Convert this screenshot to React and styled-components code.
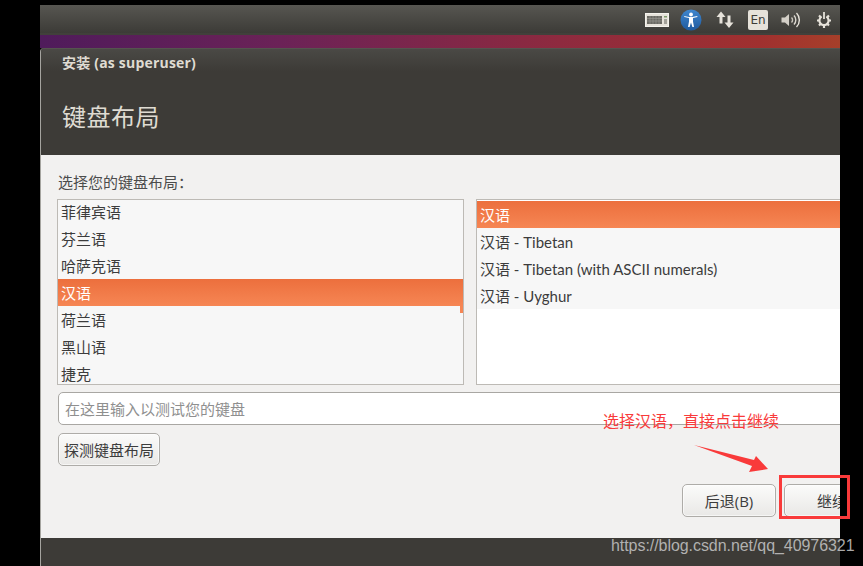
import React from "react";
import styled, { createGlobalStyle } from "styled-components";

const GlobalStyle = createGlobalStyle`
  html, body {
    margin: 0;
    padding: 0;
    background: #000;
  }
  body {
    font-family: "Open Sans", "Noto Sans CJK SC", sans-serif;
  }
`;

const Stage = styled.div`
  position: relative;
  width: 863px;
  height: 566px;
  padding-top: 5px;
  box-sizing: border-box;
  background: #000;
  overflow: hidden;
`;

const Screen = styled.div`
  width: 800px;
  height: 561px;
  margin-left: 40px;
  display: flex;
  flex-direction: column;
  overflow: hidden;
`;

const TopPanel = styled.div`
  height: 28px;
  flex: none;
  display: flex;
  align-items: center;
  justify-content: flex-end;
  padding: 2px 7px 0 0;
  box-sizing: border-box;
  background: linear-gradient(#575651, #3c3b37);
`;

const Wallpaper = styled.div`
  height: 15px;
  flex: none;
  box-sizing: border-box;
  border-top: 2px solid #41403b;
  background: linear-gradient(90deg, #4f1b5b 0%, #6b2257 30%, #8e2a3f 65%, #a0302f 90%, #a63f2a 100%);
`;

const Window = styled.div`
  flex: 1;
  min-height: 0;
  display: flex;
  flex-direction: column;
  overflow: hidden;
  border-left: 1px solid #a5a49f;
  border-top-left-radius: 4px;
  background: #3d3b37;
`;

const WindowHeader = styled.div`
  height: 107px;
  flex: none;
  padding-left: 21px;
  box-sizing: border-box;
  border-top: 1px solid #55544f;
  background: linear-gradient(#4a4945 0, #3d3b37 22px);
  color: #dfdbd2;
`;

const WindowTitle = styled.div`
  height: 28px;
  line-height: 28px;
  font-size: 14px;
  font-weight: 700;
  letter-spacing: 0.2px;
`;

const Heading = styled.h1`
  margin: 25px 0 0;
  height: 30px;
  line-height: 30px;
  font-size: 24px;
  letter-spacing: 0.5px;
  font-weight: 400;
`;

const Body = styled.div`
  width: 844px;
  height: 383px;
  flex: none;
  padding: 19px 5px 0 16px;
  box-sizing: border-box;
  background: #f2f1f0;
  color: #3c3c3c;
`;

const Prompt = styled.div`
  height: 18px;
  line-height: 16px;
  margin-bottom: 7px;
  padding-left: 1px;
  font-size: 15px;
  color: #4c4c4c;
`;

const ListRow = styled.div`
  display: flex;
  gap: 12px;
`;

const List = styled.div`
  position: relative;
  height: 186px;
  box-sizing: border-box;
  border: 1px solid #bdbab5;
  background: ${(p) => (p.$fill ? "#fff" : "#f7f7f7")};
  overflow: hidden;
  flex: ${(p) => (p.$grow ? "1" : "none")};
  width: ${(p) => (p.$grow ? "auto" : "407px")};
`;

const Rows = styled.div`
  margin-top: ${(p) => p.$offset}px;
  background: #f7f7f7;
`;

const Row = styled.div`
  height: 27px;
  line-height: 29px;
  padding-left: 3px;
  font-family: Lato, "Noto Sans CJK SC", sans-serif;
  font-size: 15px;
  white-space: nowrap;
  color: ${(p) => (p.$active ? "#fff" : "#3c3c3c")};
  background: ${(p) => (p.$active ? "linear-gradient(#ec6f3d, #f68654)" : "transparent")};
`;

const ScrollThumb = styled.div`
  position: absolute;
  right: 0;
  top: 106px;
  width: 3px;
  height: 7px;
  background: #f68654;
`;

const TestInput = styled.input`
  display: block;
  width: calc(100% - 1px);
  height: 33px;
  margin: 7px 0 0 1px;
  padding: 0 6px;
  box-sizing: border-box;
  border: 1px solid #a9a7a3;
  border-radius: 5px;
  background: #fff;
  font: 15px "Open Sans", "Noto Sans CJK SC", sans-serif;

  &::placeholder {
    color: #8f8f8f;
    opacity: 1;
  }
`;

const Button = styled.button`
  width: ${(p) => p.$width}px;
  height: 33px;
  padding: 0;
  flex: none;
  box-sizing: border-box;
  border: 1px solid #aeaca8;
  border-radius: 5px;
  background: linear-gradient(#fbfbfa, #e9e8e6);
  box-shadow: inset 0 0 0 1px rgba(255, 255, 255, 0.6);
  font: 15px "Open Sans", "Noto Sans CJK SC", sans-serif;
  color: #3c3c3c;
`;

const DetectRow = styled.div`
  margin-top: 8px;
  margin-left: 1px;
`;

const Actions = styled.div`
  display: flex;
  justify-content: flex-end;
  gap: 8px;
  margin-top: 18px;
`;

const BottomBar = styled.div`
  flex: 1;
  background: #3d3b37;
`;

const TrayIcon = styled.svg`
  display: block;
  flex: none;
  margin-left: ${(p) => p.$gap}px;
`;

const LangBadge = styled.div`
  width: 20px;
  height: 20px;
  margin-left: 14px;
  flex: none;
  border-radius: 2px;
  background: #e6e2da;
  color: #3c3b37;
  font: 12px/20px "DejaVu Sans", sans-serif;
  text-align: center;
`;

const Note = styled.div`
  position: absolute;
  left: 603px;
  top: 410px;
  font-size: 16px;
  line-height: 22px;
  color: #f93a3a;
  white-space: nowrap;
`;

const Overlay = styled.svg`
  position: absolute;
  left: 0;
  top: 0;
  pointer-events: none;
`;

const Watermark = styled.div`
  position: absolute;
  left: 611px;
  top: 537px;
  font: 16px/18px "Liberation Sans", sans-serif;
  letter-spacing: -0.06px;
  color: rgba(200, 200, 200, 0.85);
  white-space: nowrap;
`;

const leftRows = ["菲律宾语", "芬兰语", "哈萨克语", "汉语", "荷兰语", "黑山语", "捷克"];
const rightRows = ["汉语", "汉语 - Tibetan", "汉语 - Tibetan (with ASCII numerals)", "汉语 - Uyghur"];

function KeyboardIcon() {
  return (
    <TrayIcon width="24" height="14" viewBox="0 0 24 14">
      <rect x="0.5" y="0.5" width="23" height="13" fill="#e6e2da" stroke="#f4f2ec" />
      <rect x="2" y="3" width="15" height="8" fill="#6a6963" />
      <path d="M2 5.5h15M2 8h15M5 3v8M8 3v8M11 3v8M14 3v8" stroke="#9c9a93" strokeWidth="0.6" />
      <rect x="19" y="3" width="3" height="1.5" fill="#7d9a6a" />
      <rect x="19" y="6" width="3" height="5" fill="#a3a199" />
    </TrayIcon>
  );
}

function AccessIcon() {
  return (
    <TrayIcon width="22" height="22" viewBox="0 0 22 22" $gap={11}>
      <defs>
        <linearGradient id="accessBlue" x1="0" y1="0" x2="0" y2="1">
          <stop offset="0" stopColor="#3f87cf" />
          <stop offset="1" stopColor="#1f5a9e" />
        </linearGradient>
      </defs>
      <circle cx="11" cy="11" r="10.5" fill="url(#accessBlue)" />
      <circle cx="11" cy="5.5" r="1.9" fill="#fff" />
      <path d="M4.5 8l4.5 1v3.5L8 18h1.6l1.4-4.5 1.4 4.5H14l-1-5.5V9l4.5-1-.3-1-5 1h-3.2l-5-1z" fill="#fff" />
    </TrayIcon>
  );
}

function NetworkIcon() {
  return (
    <TrayIcon width="18" height="18" viewBox="0 0 18 18" $gap={14}>
      <path d="M5 0.5L0.5 6H3.5V12.5H6.5V6H9.5z" fill="#e6e2da" />
      <path d="M13 17L8.5 11.5H11.5V4.5H14.5V11.5H17.5z" fill="#e6e2da" />
    </TrayIcon>
  );
}

function VolumeIcon() {
  return (
    <TrayIcon width="20" height="18" viewBox="0 0 20 18" $gap={13}>
      <path d="M0.5 6.5H4L8 3V15L4 11.5H0.5z" fill="#d3cfc7" />
      <path d="M10.5 6.5a3.5 3.5 0 0 1 0 5" fill="none" stroke="#c9c5bc" strokeWidth="1.4" />
      <path d="M13 4.5a6.5 6.5 0 0 1 0 9" fill="none" stroke="#dcd8d0" strokeWidth="1.4" />
      <path d="M15.5 2a10 10 0 0 1 0 14" fill="none" stroke="#e6e2da" strokeWidth="1.4" />
    </TrayIcon>
  );
}

function GearIcon() {
  return (
    <TrayIcon width="18" height="18" viewBox="0 0 18 18" $gap={14}>
      <path
        d="M6.6 5.6a4.6 4.6 0 1 0 4.8 0"
        fill="none"
        stroke="#e6e2da"
        strokeWidth="2.2"
      />
      <path
        d="M2 9.5h2.5M13.5 9.5H16M4 4.5l1.8 1.8M12.2 12.7l1.8 1.8M14 4.5l-1.8 1.8M5.8 12.7L4 14.5M9 14.5V17"
        stroke="#e6e2da"
        strokeWidth="2.2"
      />
      <path d="M9 1v7" stroke="#e6e2da" strokeWidth="1.8" />
    </TrayIcon>
  );
}

export default function App() {
  return (
    <Stage>
      <GlobalStyle />
      <Screen>
        <TopPanel>
          <KeyboardIcon />
          <AccessIcon />
          <NetworkIcon />
          <LangBadge>En</LangBadge>
          <VolumeIcon />
          <GearIcon />
        </TopPanel>
        <Wallpaper />
        <Window>
          <WindowHeader>
            <WindowTitle>安装 (as superuser)</WindowTitle>
            <Heading>键盘布局</Heading>
          </WindowHeader>
          <Body>
            <Prompt>选择您的键盘布局：</Prompt>
            <ListRow>
              <List>
                <Rows $offset={-2}>
                  {leftRows.map((name) => (
                    <Row key={name} $active={name === "汉语"}>
                      {name}
                    </Row>
                  ))}
                </Rows>
                <ScrollThumb />
              </List>
              <List $grow $fill>
                <Rows $offset={1}>
                  {rightRows.map((name, i) => (
                    <Row key={name} $active={i === 0}>
                      {name}
                    </Row>
                  ))}
                </Rows>
              </List>
            </ListRow>
            <TestInput placeholder="在这里输入以测试您的键盘" readOnly />
            <DetectRow>
              <Button $width={102}>探测键盘布局</Button>
            </DetectRow>
            <Actions>
              <Button $width={94}>后退(B)</Button>
              <Button $width={96}>继续</Button>
            </Actions>
          </Body>
          <BottomBar />
        </Window>
      </Screen>
      <Note>选择汉语，直接点击继续</Note>
      <Overlay width="863" height="566" viewBox="0 0 863 566">
        <polygon points="694,445 754,460 756,456 768,469 749,472 752,466" fill="#f93a3a" />
        <rect x="780.5" y="476.5" width="68" height="41" fill="none" stroke="#f93a3a" strokeWidth="3" />
      </Overlay>
      <Watermark>https://blog.csdn.net/qq_40976321</Watermark>
    </Stage>
  );
}
